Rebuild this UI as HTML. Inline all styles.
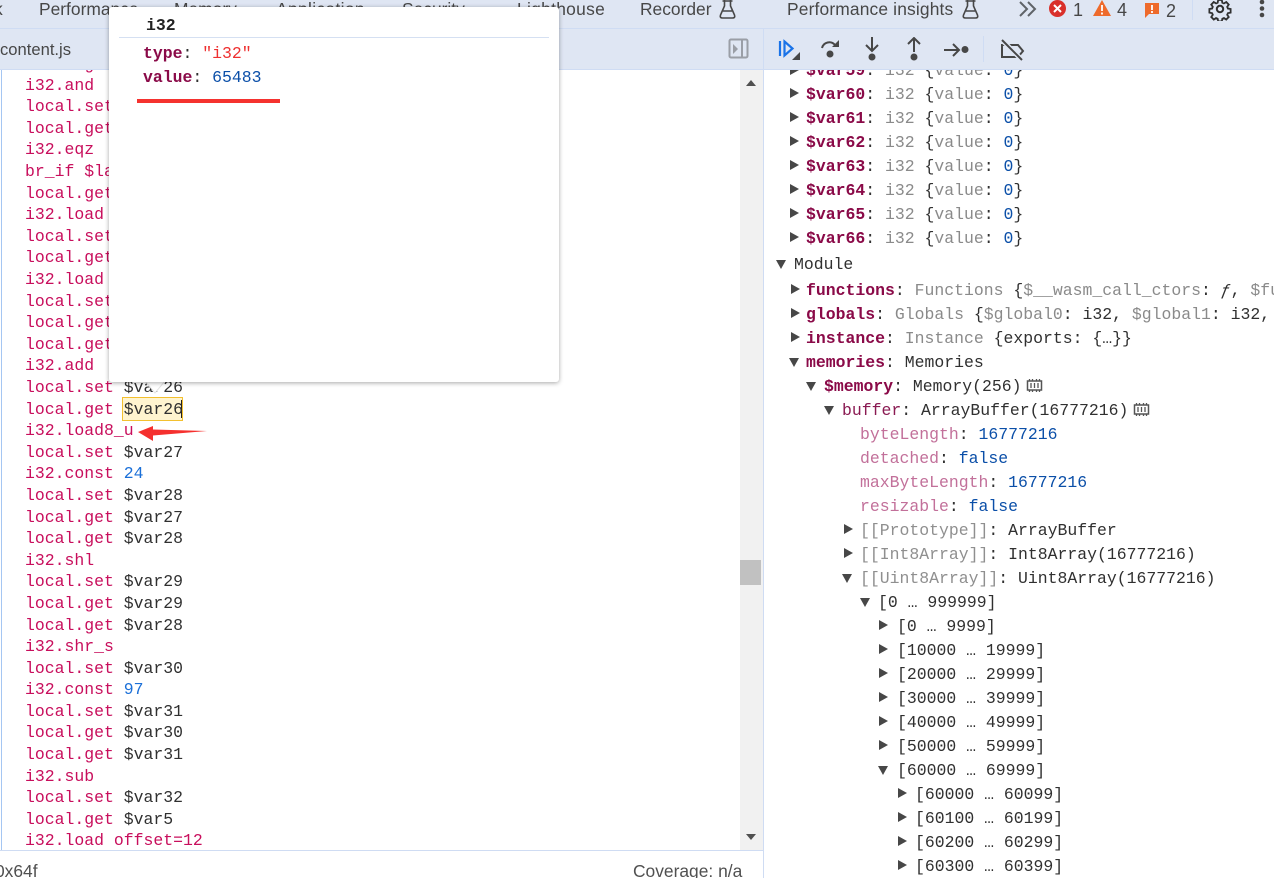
<!DOCTYPE html>
<html><head><meta charset="utf-8"><style>
html,body{margin:0;padding:0;background:#fff}
#p{position:relative;width:1274px;height:878px;overflow:hidden;background:#fff;font-family:"Liberation Mono",monospace;font-size:16.47px;color:#303030}
.l,.r,.t{position:absolute;white-space:pre;line-height:20px}
.l,.r{margin-top:1px}
.l{left:25px;color:#c80e5c}
.r{color:#303030}
.t{font-family:"Liberation Sans",sans-serif;font-size:17.4px;color:#474747;line-height:22px}
.k{color:#8a0a48;font-weight:bold}
.g{color:#8a8a8a}
.b{color:#0b4fa8}
.lb{color:#1a6fd8}
.m{color:#c2709a}
.gg{color:#8f8f8f}
.pl{color:#8a1a52}
i{position:absolute;width:0;height:0}
.c{border-left:9px solid #474747;border-top:5.5px solid transparent;border-bottom:5.5px solid transparent}
.d{border-top:9px solid #474747;border-left:5.5px solid transparent;border-right:5.5px solid transparent}
.bar{position:absolute;background:#dfe6f3}
svg{position:absolute}
</style></head><body><div id="p">

<div class="bar" style="left:0;top:0;width:1274px;height:28px"></div>
<div class="bar" style="left:0;top:29px;width:1274px;height:40px"></div>
<div style="position:absolute;left:0;top:28px;width:1274px;height:1px;background:#cfdcf3"></div>
<div style="position:absolute;left:0;top:69px;width:1274px;height:1px;background:#cfdcf3"></div>
<div style="position:absolute;left:763px;top:29px;width:1px;height:849px;background:#cfdcf3"></div>
<div style="position:absolute;left:1px;top:70px;width:1px;height:780px;background:#a5c6f2"></div>

<div class="t" style="left:-6px;top:-2px">k</div>
<div class="t" style="left:39px;top:-2px">Performance</div>
<div class="t" style="left:174px;top:-2px">Memory</div>
<div class="t" style="left:276px;top:-2px;letter-spacing:.35px">Application</div>
<div class="t" style="left:402px;top:-2px">Security</div>
<div class="t" style="left:517px;top:-2px;letter-spacing:.3px">Lighthouse</div>
<div class="t" style="left:640px;top:-2px">Recorder</div>
<div class="t" style="left:787px;top:-2px;letter-spacing:.15px">Performance insights</div>

<svg style="left:719px;top:0" width="17" height="20" viewBox="0 0 17 20"><path d="M5.500 0v6L1.500 15q-1 3 2 3h10q3 0 2-3L11.500 6V0M3.500 1h10M4 11h9" fill="none" stroke="#474747" stroke-width="1.600"/></svg>
<svg style="left:962px;top:0" width="17" height="20" viewBox="0 0 17 20"><path d="M5.500 0v6L1.500 15q-1 3 2 3h10q3 0 2-3L11.500 6V0M3.500 1h10M4 11h9" fill="none" stroke="#474747" stroke-width="1.600"/></svg>

<svg style="left:1019px;top:1px" width="20" height="18" viewBox="0 0 20 18"><path d="M1 1l7 7-7 7M9 1l7 7-7 7" fill="none" stroke="#5f6368" stroke-width="2"/></svg>
<svg style="left:1049px;top:0" width="20" height="18" viewBox="0 0 20 18"><circle cx="8.500" cy="8.500" r="8.500" fill="#d9302b"/><path d="M5 5l7 7M12 5l-7 7" stroke="#fff" stroke-width="2"/></svg>
<div class="t" style="left:1073px;top:-1px;font-size:18px">1</div>
<svg style="left:1093px;top:0" width="20" height="18" viewBox="0 0 20 18"><path d="M9 0L18 16H0z" fill="#ee6a2b"/><path d="M9 5v6M9 12.500v2" stroke="#fff" stroke-width="1.800"/></svg>
<div class="t" style="left:1117px;top:-1px;font-size:18px">4</div>
<svg style="left:1145px;top:3px" width="16" height="16" viewBox="0 0 16 16"><path d="M0 0h14v11H4l-4 4z" fill="#ee6a2b"/><path d="M7 2v5M7 8v2" stroke="#fff" stroke-width="1.800"/></svg>
<div class="t" style="left:1166px;top:0;font-size:18px">2</div>
<div style="position:absolute;left:1192px;top:0;width:1px;height:20px;background:#cfdcf3"></div>
<svg style="left:1208px;top:-3px" width="24" height="24" viewBox="0 0 24 24"><circle cx="12" cy="12" r="3.200" fill="none" stroke="#303030" stroke-width="2"/><path d="M10 2h4l.6 3 1.800.8 2.600-1.600 2.700 2.900-1.700 2.500.8 1.900 3 .5v4l-3 .6-.8 1.800 1.700 2.500-2.800 2.800-2.500-1.700-1.800.8-.6 3h-4l-.6-3-1.800-.8-2.500 1.700-2.800-2.800 1.700-2.500-.8-1.800-3-.6v-4l3-.5.800-1.900-1.700-2.500L5 4.200l2.600 1.600L9.400 5z" transform="translate(1.200 1.200) scale(.9)" fill="none" stroke="#303030" stroke-width="2"/></svg>
<svg style="left:1258px;top:0" width="8" height="20" viewBox="0 0 8 20"><circle cx="4" cy="2" r="2.300" fill="#474747"/><circle cx="4" cy="8.500" r="2.300" fill="#474747"/><circle cx="4" cy="15" r="2.300" fill="#474747"/></svg>

<div class="t" style="left:0;top:39px;font-size:16.6px">content.js</div>
<svg style="left:728px;top:38px" width="22" height="22" viewBox="0 0 22 22"><rect x="1.500" y="1.500" width="18" height="18" rx="1.500" fill="none" stroke="#9a9ea6" stroke-width="2"/><path d="M14 2v17" stroke="#9a9ea6" stroke-width="2"/><path d="M5 6l5 5-5 5z" fill="#9a9ea6"/></svg>

<svg style="left:778px;top:38px" width="24" height="24" viewBox="0 0 24 24"><path d="M2 3v15" stroke="#1a73e8" stroke-width="2.200"/><path d="M6.500 3.500l8 7-8 7z" fill="none" stroke="#1a73e8" stroke-width="2.200"/><path d="M22 14v8h-8z" fill="#474747"/></svg>
<svg style="left:820px;top:38px" width="22" height="22" viewBox="0 0 22 22"><path d="M2 10a7.500 7.500 0 0 1 13-3" fill="none" stroke="#474747" stroke-width="2"/><path d="M12 9h7V2z" fill="#474747"/><circle cx="10" cy="16" r="3.500" fill="#474747"/></svg>
<svg style="left:862px;top:37px" width="20" height="26" viewBox="0 0 20 26"><path d="M10 0v13M4 8l6 6 6-6" fill="none" stroke="#474747" stroke-width="2"/><circle cx="10" cy="20" r="3.500" fill="#474747"/></svg>
<svg style="left:904px;top:37px" width="20" height="26" viewBox="0 0 20 26"><path d="M10 15V2M4 7l6-6 6 6" fill="none" stroke="#474747" stroke-width="2"/><circle cx="10" cy="20" r="3.500" fill="#474747"/></svg>
<svg style="left:943px;top:40px" width="28" height="20" viewBox="0 0 28 20"><path d="M1 10h14M10 4l6 6-6 6" fill="none" stroke="#474747" stroke-width="2"/><circle cx="22" cy="9.500" r="3.500" fill="#474747"/></svg>
<div style="position:absolute;left:983px;top:36px;width:1px;height:26px;background:#cfdcf3"></div>
<svg style="left:998px;top:37px" width="28" height="26" viewBox="0 0 28 26"><path d="M4 8h16l5 6-5 6H4z" fill="none" stroke="#474747" stroke-width="2"/><path d="M4 3l20 20" stroke="#dfe6f3" stroke-width="5"/><path d="M4 3l20 20" stroke="#474747" stroke-width="2"/></svg>

<div style="position:absolute;left:740px;top:70px;width:23px;height:781px;background:#f1f1f1"></div>
<div style="position:absolute;left:740px;top:560px;width:21px;height:25px;background:#c1c1c1"></div>
<i style="left:746px;top:80px;border-bottom:6px solid #505050;border-left:5px solid transparent;border-right:5px solid transparent"></i>
<i style="left:746px;top:834px;border-top:6px solid #505050;border-left:5px solid transparent;border-right:5px solid transparent"></i>
<div style="position:absolute;left:0;top:850px;width:763px;height:1px;background:#cfdcf3"></div>
<div class="t" style="left:-5px;top:860px;font-size:17.4px;color:#505050">0x64f</div>
<div class="t" style="left:633px;top:860px;font-size:17.4px;color:#505050">Coverage: n/a</div>

<div style="position:absolute;left:0;top:0;width:740px;height:878px;clip-path:inset(70px 0 28px 0)">
<div class="l" style="top:54px">local.get</div>
<div class="l" style="top:75px">i32.and</div>
<div class="l" style="top:96px">local.set</div>
<div class="l" style="top:118px">local.get</div>
<div class="l" style="top:139px">i32.eqz</div>
<div class="l" style="top:161px">br_if $la</div>
<div class="l" style="top:183px">local.get</div>
<div class="l" style="top:204px">i32.load</div>
<div class="l" style="top:226px">local.set</div>
<div class="l" style="top:247px">local.get</div>
<div class="l" style="top:269px">i32.load</div>
<div class="l" style="top:291px">local.set</div>
<div class="l" style="top:312px">local.get</div>
<div class="l" style="top:334px">local.get</div>
<div class="l" style="top:355px">i32.add</div>
<div class="l" style="top:377px">local.set <span style="color:#303030">$var26</span></div>
<div style="position:absolute;left:122px;top:397px;width:59px;height:22px;background:#fff4cf;border:1px solid #f3c02f"></div>
<div style="position:absolute;left:181px;top:400px;width:1px;height:18px;background:#222"></div>
<div class="l" style="top:399px">local.get <span style="color:#303030">$var26</span></div>
<div class="l" style="top:420px">i32.load8_u</div>
<div class="l" style="top:442px">local.set <span style="color:#303030">$var27</span></div>
<div class="l" style="top:463px">i32.const <span class="lb">24</span></div>
<div class="l" style="top:485px">local.set <span style="color:#303030">$var28</span></div>
<div class="l" style="top:507px">local.get <span style="color:#303030">$var27</span></div>
<div class="l" style="top:528px">local.get <span style="color:#303030">$var28</span></div>
<div class="l" style="top:550px">i32.shl</div>
<div class="l" style="top:571px">local.set <span style="color:#303030">$var29</span></div>
<div class="l" style="top:593px">local.get <span style="color:#303030">$var29</span></div>
<div class="l" style="top:615px">local.get <span style="color:#303030">$var28</span></div>
<div class="l" style="top:636px">i32.shr_s</div>
<div class="l" style="top:658px">local.set <span style="color:#303030">$var30</span></div>
<div class="l" style="top:679px">i32.const <span class="lb">97</span></div>
<div class="l" style="top:701px">local.set <span style="color:#303030">$var31</span></div>
<div class="l" style="top:722px">local.get <span style="color:#303030">$var30</span></div>
<div class="l" style="top:744px">local.get <span style="color:#303030">$var31</span></div>
<div class="l" style="top:766px">i32.sub</div>
<div class="l" style="top:787px">local.set <span style="color:#303030">$var32</span></div>
<div class="l" style="top:809px">local.get <span style="color:#303030">$var5</span></div>
<div class="l" style="top:830px">i32.load offset=12</div>
</div>

<svg style="left:135px;top:424px" width="75" height="20" viewBox="0 0 75 20"><path d="M3 8L18 2v3.500L72 7 18 11.500V17z" fill="#f5302e"/></svg>

<svg style="left:143px;top:378px" width="24" height="18" viewBox="0 0 24 18"><path d="M2 3h20l-10 12z" fill="#fff" stroke="#e4e4e4" stroke-width="1"/></svg>
<div style="position:absolute;left:109px;top:7px;width:450px;height:375px;background:#fff;border-radius:3px;box-shadow:0 1px 5px rgba(0,0,0,.35)"></div>
<div style="position:absolute;left:119px;top:37px;width:430px;height:1px;background:#d5e0f2"></div>
<div class="r" style="left:146px;top:15px;font-weight:bold;color:#222">i32</div>
<div class="r" style="left:143px;top:43px"><span class="k">type</span>: <span style="color:#ee3030">"i32"</span></div>
<div class="r" style="left:143px;top:67px"><span class="k">value</span>: <span class="b">65483</span></div>
<div style="position:absolute;left:137px;top:99px;width:143px;height:4px;background:#f5322f"></div>

<div style="position:absolute;left:764px;top:70px;width:510px;height:808px;overflow:hidden">
<div class="r" style="left:42px;top:-10px"><span class="k">$var59</span>: <span class="g">i32</span> {<span class="g">value</span>: <span class="b">0</span>}</div>
<i class="c" style="left:26px;top:-5px"></i>
<div class="r" style="left:42px;top:14px"><span class="k">$var60</span>: <span class="g">i32</span> {<span class="g">value</span>: <span class="b">0</span>}</div>
<i class="c" style="left:26px;top:18px"></i>
<div class="r" style="left:42px;top:38px"><span class="k">$var61</span>: <span class="g">i32</span> {<span class="g">value</span>: <span class="b">0</span>}</div>
<i class="c" style="left:26px;top:42px"></i>
<div class="r" style="left:42px;top:62px"><span class="k">$var62</span>: <span class="g">i32</span> {<span class="g">value</span>: <span class="b">0</span>}</div>
<i class="c" style="left:26px;top:66px"></i>
<div class="r" style="left:42px;top:86px"><span class="k">$var63</span>: <span class="g">i32</span> {<span class="g">value</span>: <span class="b">0</span>}</div>
<i class="c" style="left:26px;top:90px"></i>
<div class="r" style="left:42px;top:110px"><span class="k">$var64</span>: <span class="g">i32</span> {<span class="g">value</span>: <span class="b">0</span>}</div>
<i class="c" style="left:26px;top:114px"></i>
<div class="r" style="left:42px;top:134px"><span class="k">$var65</span>: <span class="g">i32</span> {<span class="g">value</span>: <span class="b">0</span>}</div>
<i class="c" style="left:26px;top:138px"></i>
<div class="r" style="left:42px;top:158px"><span class="k">$var66</span>: <span class="g">i32</span> {<span class="g">value</span>: <span class="b">0</span>}</div>
<i class="c" style="left:26px;top:162px"></i>
<div class="r" style="left:30px;top:184px">Module</div>
<i class="d" style="left:12px;top:190px"></i>
<div class="r" style="left:42px;top:210px"><span class="k">functions</span>: <span class="g">Functions</span> {<span class="g">$__wasm_call_ctors</span>: <em>ƒ</em>, <span class="g">$fu</span></div>
<i class="c" style="left:27px;top:214px"></i>
<div class="r" style="left:42px;top:234px"><span class="k">globals</span>: <span class="g">Globals</span> {<span class="g">$global0</span>: i32, <span class="g">$global1</span>: i32,</div>
<i class="c" style="left:27px;top:238px"></i>
<div class="r" style="left:42px;top:258px"><span class="k">instance</span>: <span class="g">Instance</span> {exports: {…}}</div>
<i class="c" style="left:27px;top:262px"></i>
<div class="r" style="left:42px;top:282px"><span class="k">memories</span>: Memories</div>
<i class="d" style="left:25px;top:288px"></i>
<div class="r" style="left:60px;top:306px"><span class="k">$memory</span>: Memory(256)</div>
<i class="d" style="left:42px;top:312px"></i>
<svg style="left:262px;top:308px" width="17" height="16" viewBox="0 0 17 16"><rect x="1.500" y="3" width="14" height="9" fill="none" stroke="#555" stroke-width="1.500"/><path d="M5 5v5M8.500 5v5M12 5v5M3.500 1v2M6.500 1v2M10.500 1v2M13.500 1v2M3.500 12v2M6.500 12v2M10.500 12v2M13.500 12v2" stroke="#555" stroke-width="1.300"/></svg>
<div class="r" style="left:78px;top:330px"><span class="pl">buffer</span>: ArrayBuffer(16777216)</div>
<i class="d" style="left:60px;top:336px"></i>
<svg style="left:369px;top:332px" width="17" height="16" viewBox="0 0 17 16"><rect x="1.500" y="3" width="14" height="9" fill="none" stroke="#555" stroke-width="1.500"/><path d="M5 5v5M8.500 5v5M12 5v5M3.500 1v2M6.500 1v2M10.500 1v2M13.500 1v2M3.500 12v2M6.500 12v2M10.500 12v2M13.500 12v2" stroke="#555" stroke-width="1.300"/></svg>
<div class="r" style="left:96px;top:354px"><span class="m">byteLength</span>: <span class="b">16777216</span></div>
<div class="r" style="left:96px;top:378px"><span class="m">detached</span>: <span class="b">false</span></div>
<div class="r" style="left:96px;top:402px"><span class="m">maxByteLength</span>: <span class="b">16777216</span></div>
<div class="r" style="left:96px;top:426px"><span class="m">resizable</span>: <span class="b">false</span></div>
<div class="r" style="left:96px;top:450px"><span class="gg">[[Prototype]]</span>: ArrayBuffer</div>
<i class="c" style="left:80px;top:454px"></i>
<div class="r" style="left:96px;top:474px"><span class="gg">[[Int8Array]]</span>: Int8Array(16777216)</div>
<i class="c" style="left:80px;top:478px"></i>
<div class="r" style="left:96px;top:498px"><span class="gg">[[Uint8Array]]</span>: Uint8Array(16777216)</div>
<i class="d" style="left:78px;top:504px"></i>
<div class="r" style="left:114px;top:522px">[0 … 999999]</div>
<i class="d" style="left:96px;top:528px"></i>
<div class="r" style="left:133px;top:546px">[0 … 9999]</div>
<i class="c" style="left:115px;top:550px"></i>
<div class="r" style="left:133px;top:570px">[10000 … 19999]</div>
<i class="c" style="left:115px;top:574px"></i>
<div class="r" style="left:133px;top:594px">[20000 … 29999]</div>
<i class="c" style="left:115px;top:598px"></i>
<div class="r" style="left:133px;top:618px">[30000 … 39999]</div>
<i class="c" style="left:115px;top:622px"></i>
<div class="r" style="left:133px;top:642px">[40000 … 49999]</div>
<i class="c" style="left:115px;top:646px"></i>
<div class="r" style="left:133px;top:666px">[50000 … 59999]</div>
<i class="c" style="left:115px;top:670px"></i>
<div class="r" style="left:133px;top:690px">[60000 … 69999]</div>
<i class="d" style="left:114px;top:696px"></i>
<div class="r" style="left:151px;top:714px">[60000 … 60099]</div>
<i class="c" style="left:134px;top:718px"></i>
<div class="r" style="left:151px;top:738px">[60100 … 60199]</div>
<i class="c" style="left:134px;top:742px"></i>
<div class="r" style="left:151px;top:762px">[60200 … 60299]</div>
<i class="c" style="left:134px;top:766px"></i>
<div class="r" style="left:151px;top:786px">[60300 … 60399]</div>
<i class="c" style="left:134px;top:790px"></i>
</div>

</div></body></html>
